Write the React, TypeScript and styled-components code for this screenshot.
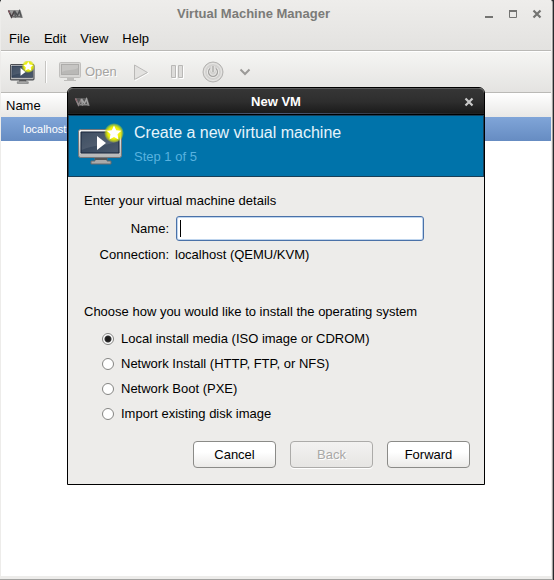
import React, { useId, useState } from "react";
import styled, { createGlobalStyle, css } from "styled-components";

const GlobalStyle = createGlobalStyle`
  * { box-sizing: border-box; }
  html, body { margin: 0; padding: 0; }
  body, button, input {
    font-family: "Liberation Sans", Arial, sans-serif;
    font-size: 13px;
    line-height: 16px;
    color: #000;
  }
  body { background: #26292c; }
`;

const Desktop = styled.div`
  display: flex;
  min-height: 100vh;
  padding-right: 1px;
`;

const Window = styled.main`
  position: relative;
  flex: 1;
  display: flex;
  flex-direction: column;
  background: #edecea;
  border: solid #a3a3a1;
  border-width: 0 1px 1px 0;
  border-radius: 3px 3px 0 0;
  padding: 0 1px 3px;
`;

const Chrome = styled.header`
  background: linear-gradient(#eeedeb, #e3e2e0);
  border-bottom: 1px solid #bab9b6;
  height: 51px;
`;

const TitleBar = styled.div`
  display: grid;
  grid-template-columns: 16px 1fr 58px;
  align-items: center;
  height: 27px;
  padding: 0 9px 0 6px;
`;

const WindowTitle = styled.h1`
  margin: 0;
  font-size: 13px;
  line-height: 16px;
  font-weight: bold;
  text-align: center;
  color: #7b7b78;
`;

const WindowControls = styled.div`
  display: flex;
  gap: 14px;
`;

const IconButton = styled.button`
  display: flex;
  align-items: center;
  justify-content: center;
  gap: 4px;
  margin: 0;
  padding: 0;
  border: 0;
  background: none;
  color: inherit;
  svg { display: block; }
`;

const MenuBar = styled.nav`
  display: flex;
  gap: 14px;
  align-items: center;
  height: 24px;
  padding-left: 8px;
`;

const MenuItem = styled.button`
  border: 0;
  padding: 0;
  background: none;
`;

const Toolbar = styled.div`
  display: flex;
  align-items: center;
  height: 42px;
  padding-left: 9px;
  color: #a5a4a2;
  background: linear-gradient(#f5f5f3, #e4e3e1);
  border-top: 1px solid #fff;
  border-bottom: 1px solid #bab9b6;
`;

const Separator = styled.span`
  width: 2px;
  height: 22px;
  margin: 0 12px 0 10px;
  background: #c6c5c2;
  border-right: 1px solid #fff;
`;

const ToolGroup = styled.div`
  display: flex;
  align-items: center;
`;

const ToolButton = styled(IconButton)<{ $space?: number }>`
  margin-left: ${(p) => p.$space ?? 0}px;
  text-shadow: 1px 1px 0 #fff;
`;

const MachineTable = styled.table`
  width: 100%;
  border-collapse: collapse;
`;

const ColumnHead = styled.th`
  height: 24px;
  padding: 1px 5px 0;
  font-weight: normal;
  text-align: left;
  background: linear-gradient(#fff, #e9e8e6);
`;

const MachineCell = styled.td`
  height: 24px;
  padding: 0 22px;
  font-size: 11px;
  color: #fff;
  background: linear-gradient(#80a5d8, #668cc2);
`;

const ListArea = styled.section`
  flex: 1;
  background: #fff;
`;

const Overlay = styled.div`
  position: absolute;
  inset: 0;
  display: flex;
  justify-content: center;
  align-items: flex-start;
  padding-top: 87px;
`;

const Dialog = styled.section`
  width: 100%;
  max-width: 418px;
  border: 1px solid #000;
  border-radius: 6px 6px 0 0;
  background: #edecea;
`;

const DialogBar = styled.div`
  display: grid;
  grid-template-columns: 24px 1fr 20px;
  align-items: center;
  height: 27px;
  padding: 0 10px 0 6px;
  border-radius: 5px 5px 0 0;
  border-top: 1px solid #5a5a5a;
  border-bottom: 1px solid #000;
  background:
    linear-gradient(90deg, #222 5%, #4c5c79 50%, #222 95%) bottom / 100% 1px no-repeat,
    linear-gradient(#363636, #2e2e2e 50%, #191919);
`;

const CloseButton = styled(IconButton)`
  justify-content: flex-end;
`;

const DialogTitle = styled.h2`
  margin: 0;
  font-size: 13px;
  line-height: 16px;
  text-align: center;
  color: #fff;
`;

const Banner = styled.header`
  display: flex;
  gap: 10px;
  height: 62px;
  padding: 7px 9px 0;
  background: #0073aa;
  border: 1px solid #183f58;
`;

const BannerTitle = styled.p`
  margin: 0;
  font-size: 16px;
  line-height: 20px;
  color: #e6f4fb;
`;

const BannerStep = styled.p`
  margin: 6px 0 0;
  font-size: 13px;
  line-height: 16px;
  color: #59b2df;
`;

const Form = styled.form`
  padding: 16px 14px 16px 16px;
`;

const Prompt = styled.p`
  margin: 0;
`;

const Details = styled.div`
  display: grid;
  grid-template-columns: 85px 1fr;
  column-gap: 6px;
  row-gap: 6px;
  align-items: center;
  margin: 7px 47px 41px 0;
`;

const FieldLabel = styled.label`
  text-align: right;
`;

const NameInput = styled.input`
  width: 100%;
  height: 25px;
  padding: 0 4px;
  margin-left: 1px;
  border: 1px solid #4a71a8;
  border-radius: 3px;
  outline: none;
  background: #fff;
  box-shadow: inset 0 0 0 1px #bfd5ee;
  &:placeholder-shown {
    background: linear-gradient(#000, #000) 3px 3px / 1px 17px no-repeat, #fff;
    caret-color: transparent;
  }
`;

const Choices = styled.fieldset`
  display: grid;
  gap: 9px;
  margin: 0 0 19px;
  padding: 0;
  border: 0;
  min-width: 0;
`;

const ChoicesLegend = styled.legend`
  padding: 0;
  margin-bottom: 11px;
`;

const Choice = styled.label`
  display: flex;
  align-items: center;
  gap: 7px;
  padding-left: 18px;
`;

const Radio = styled.input`
  appearance: none;
  flex: none;
  width: 12px;
  height: 12px;
  margin: 0;
  border: 1px solid #858583;
  border-radius: 50%;
  background: #fff;
  &:checked {
    background: radial-gradient(circle, #1d1d1d 0 2px, #333 3px, #fff 4px);
  }
`;

const Actions = styled.div`
  display: flex;
  justify-content: flex-end;
  gap: 14px;
`;

const ActionButton = styled.button`
  width: 83px;
  height: 27px;
  padding: 0;
  border: 1px solid #8b8b88;
  border-radius: 4px;
  background: linear-gradient(#fff 40%, #ebeae8);
  ${(p) =>
    p.disabled &&
    css`
      color: #a9a8a6;
      text-shadow: 1px 1px 0 #fff;
      border-color: #acaba9;
      background: linear-gradient(#f3f2f1, #e6e5e3);
      box-shadow: 0 1px 0 #fff;
    `}
`;

const VmLogo = ({ dark = false }: { dark?: boolean }) => (
  <svg width="16" height="10" viewBox="0 0 16 10" fill="none" aria-hidden="true">
    <path d="M1 1h12.500L16 9H4Z" fill={dark ? "#555" : "#9c9c9c"} />
    <path d="m1.500 1.500 3 6.500L7.500 2" stroke={dark ? "#8d8587" : "#4a4245"} strokeWidth="1.600" />
    <path d="M8.500 8.500 7.500 2l3 4.500L12.500 2l2 6.500" stroke={dark ? "#a3a3a3" : "#505254"} strokeWidth="1.400" />
    <path d="M6 7.500h9" stroke={dark ? "#8a8a8a" : "#666"} />
    <path d="m1.500 1.500 1.500 3" stroke="#96606a" />
  </svg>
);

const CloseIcon = ({ color }: { color: string }) => (
  <svg width="10" height="10" viewBox="0 0 10 10" aria-hidden="true">
    <path d="m1.500 1.500 7 7m0-7-7 7" stroke={color} strokeWidth="2.200" />
  </svg>
);

const MonitorIcon = ({ size }: { size: "small" | "large" }) => {
  const id = useId();
  const large = size === "large";
  return (
    <svg width={large ? 46 : 25} height={large ? 42 : 23} viewBox={large ? "0 0 46 42" : "0 0 45 42"} aria-hidden="true">
      <defs>
        <linearGradient id={`${id}f`} x1="0" y1="0" x2="0" y2="1">
          <stop offset="0" stopColor="#f4f4f3" />
          <stop offset="1" stopColor="#b5b6b6" />
        </linearGradient>
        <linearGradient id={`${id}s`} x1="0" y1="0" x2="1" y2="1">
          <stop offset="0" stopColor="#293a50" />
          <stop offset="1" stopColor="#4d5b6e" />
        </linearGradient>
        <radialGradient id={`${id}g`}>
          <stop offset="0" stopColor="#fff76b" />
          <stop offset=".6" stopColor="#eef000" />
          <stop offset=".82" stopColor="#d6e410" stopOpacity=".65" />
          <stop offset="1" stopColor="#d6e410" stopOpacity="0" />
        </radialGradient>
      </defs>
      <path d="M17 35h12v3h4v3H13v-3h4Z" fill="#aaa" stroke="#67686a" />
      <path d="M17 36h12" stroke="#555" strokeWidth="2" />
      <rect x=".5" y="6.500" width="43" height="28" rx="2" fill={`url(#${id}f)`} stroke={large ? "#76777a" : "#4c4e52"} strokeWidth={large ? 1 : 2} />
      <path d="M3 9h38v21H3Z" fill={`url(#${id}s)`} stroke="#17253a" />
      <path d="M3.500 9.500h37V18C28 24 16 21 3.500 27Z" fill="#fff" opacity=".1" />
      <path d="m19 13 9 7-9 7Z" fill="#fff" />
      <circle cx={large ? 36 : 33} cy="10" r={large ? 10 : 12} fill={`url(#${id}g)`} />
      <path
        d={
          large
            ? "m36 2.500 2.200 4.700 5.100.6-3.800 3.500 1 5.200-4.500-2.600-4.500 2.600 1-5.200-3.800-3.500 5.100-.6Z"
            : "m33 1 2.700 5.500 6.300.8-4.600 4.200 1.200 6.500-5.600-3.200-5.600 3.200 1.200-6.500L24 7.300l6.300-.8Z"
        }
        fill="#fff"
      />
    </svg>
  );
};

const OpenIcon = () => (
  <svg width="22" height="20" viewBox="0 0 22 20" aria-hidden="true">
    <path d="M8 16h7v2h2v1H5v-1h3Z" fill="#bdbcba" />
    <rect x=".5" y=".5" width="21" height="15" rx="1" fill="#d6d5d3" stroke="#c0bfbd" />
    <rect x="2.500" y="2.500" width="17" height="10" fill="#b9b8b6" stroke="#adacaa" />
    <path d="M3 3h16v3C13 9 9 7 3 10Z" fill="#c6c5c3" />
  </svg>
);

const PlayIcon = () => (
  <svg width="15" height="17" viewBox="0 0 15 17" aria-hidden="true">
    <path d="m1.500 2 13 7-13 7.500Z" fill="none" stroke="#fff" />
    <path d="m.5 1 13 7.500-13 7Z" fill="#e3e2e0" stroke="#b9b8b6" />
  </svg>
);

const PauseIcon = () => (
  <svg width="14" height="14" viewBox="0 0 14 14" aria-hidden="true">
    <path d="M1.500 1.500h4v12h-4Zm7 0h4v12h-4Z" fill="none" stroke="#fff" />
    <path d="M.5.5h4v12h-4Zm7 0h4v12h-4Z" fill="#dddcda" stroke="#b9b8b6" />
  </svg>
);

const PowerIcon = () => (
  <svg width="22" height="22" viewBox="0 0 22 22" fill="none" aria-hidden="true">
    <circle cx="11" cy="11" r="10" fill="#d2d1cf" stroke="#b5b4b2" />
    <circle cx="11" cy="11" r="8.500" fill="#d3d2d0" stroke="#e9e8e6" />
    <path d="M8 7.500a4.500 4.500 0 1 0 6 0M11 5v6" stroke="#efeeec" strokeWidth="3" />
    <path d="M8 7.500a4.500 4.500 0 1 0 6 0M11 5v6" stroke="#a3a2a0" strokeWidth="1.300" />
  </svg>
);

const INSTALL_METHODS = [
  "Local install media (ISO image or CDROM)",
  "Network Install (HTTP, FTP, or NFS)",
  "Network Boot (PXE)",
  "Import existing disk image",
];

export default function App() {
  const [name, setName] = useState("");
  const [method, setMethod] = useState(0);

  return (
    <>
      <GlobalStyle />
      <Desktop>
        <Window>
          <Chrome>
            <TitleBar>
              <VmLogo />
              <WindowTitle>Virtual Machine Manager</WindowTitle>
              <WindowControls>
                <IconButton aria-label="Minimize">
                  <svg width="10" height="10" viewBox="0 0 10 10"><path d="M1 8h8" stroke="#747472" strokeWidth="2" /></svg>
                </IconButton>
                <IconButton aria-label="Maximize">
                  <svg width="10" height="10" viewBox="0 0 10 10"><path d="M1.500 1.500h7v7h-7Z" fill="none" stroke="#747472" /><path d="M1 2h8" stroke="#747472" strokeWidth="2" /></svg>
                </IconButton>
                <IconButton aria-label="Close"><CloseIcon color="#747472" /></IconButton>
              </WindowControls>
            </TitleBar>
            <MenuBar>
              {["File", "Edit", "View", "Help"].map((item) => (
                <MenuItem key={item}>{item}</MenuItem>
              ))}
            </MenuBar>
          </Chrome>
          <Toolbar>
            <IconButton aria-label="New virtual machine"><MonitorIcon size="small" /></IconButton>
            <Separator />
            <ToolGroup>
              <ToolButton disabled><OpenIcon />Open</ToolButton>
              <ToolButton disabled $space={17} aria-label="Run"><PlayIcon /></ToolButton>
              <ToolButton disabled $space={22} aria-label="Pause"><PauseIcon /></ToolButton>
              <ToolButton disabled $space={17} aria-label="Shut down"><PowerIcon /></ToolButton>
              <ToolButton $space={15} aria-label="Shut down options">
                <svg width="12" height="8" viewBox="0 0 12 8" fill="none"><path d="m1.500 1.500 4.500 4.500 4.500-4.500" stroke="#9b9a98" strokeWidth="2" /></svg>
              </ToolButton>
            </ToolGroup>
          </Toolbar>
          <ListArea>
            <MachineTable>
              <thead><tr><ColumnHead scope="col">Name</ColumnHead></tr></thead>
              <tbody><tr><MachineCell>localhost</MachineCell></tr></tbody>
            </MachineTable>
          </ListArea>

          <Overlay>
            <Dialog role="dialog" aria-labelledby="dialog-title">
              <DialogBar>
                <VmLogo dark />
                <DialogTitle id="dialog-title">New VM</DialogTitle>
                <CloseButton aria-label="Close dialog"><CloseIcon color="#c9c9c9" /></CloseButton>
              </DialogBar>
              <Banner>
                <MonitorIcon size="large" />
                <div>
                  <BannerTitle>Create a new virtual machine</BannerTitle>
                  <BannerStep>Step 1 of 5</BannerStep>
                </div>
              </Banner>
              <Form onSubmit={(e) => e.preventDefault()}>
                <Prompt>Enter your virtual machine details</Prompt>
                <Details>
                  <FieldLabel htmlFor="vm-name">Name:</FieldLabel>
                  <NameInput id="vm-name" placeholder=" " value={name} onChange={(e) => setName(e.target.value)} />
                  <FieldLabel as="span">Connection:</FieldLabel>
                  <span>localhost (QEMU/KVM)</span>
                </Details>
                <Choices>
                  <ChoicesLegend>Choose how you would like to install the operating system</ChoicesLegend>
                  {INSTALL_METHODS.map((label, i) => (
                    <Choice key={label}>
                      <Radio type="radio" name="method" checked={method === i} onChange={() => setMethod(i)} />
                      {label}
                    </Choice>
                  ))}
                </Choices>
                <Actions>
                  <ActionButton type="button">Cancel</ActionButton>
                  <ActionButton type="button" disabled>Back</ActionButton>
                  <ActionButton type="submit">Forward</ActionButton>
                </Actions>
              </Form>
            </Dialog>
          </Overlay>
        </Window>
      </Desktop>
    </>
  );
}
